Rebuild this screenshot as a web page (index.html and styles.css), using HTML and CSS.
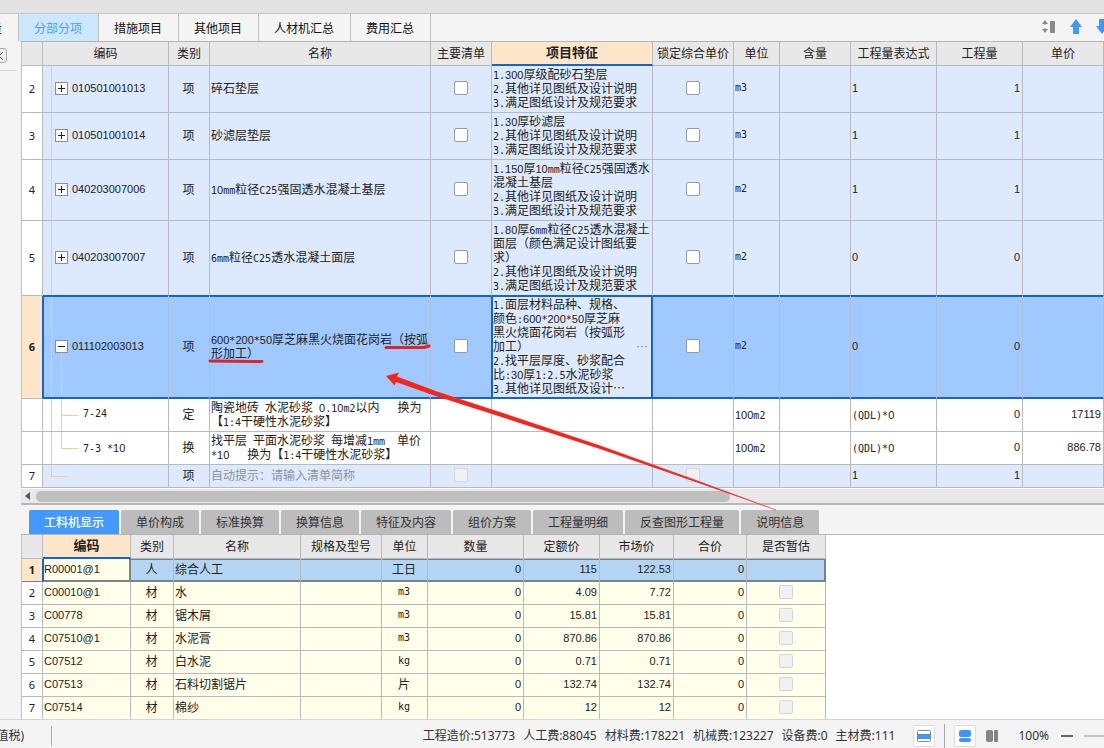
FILE: index.html
```html
<!DOCTYPE html>
<html lang="zh-CN">
<head>
<meta charset="utf-8">
<title>分部分项</title>
<link rel="stylesheet" href="styles.css">
</head>
<body>
<div class="app">
  <div class="titlebar"></div>
  <nav class="tabs">
    <button class="tab tab-cut">量</button>
    <button class="tab active">分部分项</button>
    <button class="tab">措施项目</button>
    <button class="tab">其他项目</button>
    <button class="tab">人材机汇总</button>
    <button class="tab">费用汇总</button>
    <div class="tools">
      <button class="tool" aria-label="行高"><svg width="14" height="14" viewBox="0 0 14 14"><path d="M3 0L6 4H0ZM3 13L0 9H6ZM2.5 4h1v1h-1zM2.5 8h1v1h-1z" fill="#8a8a8a"/><rect x="8" y="1" width="5" height="12" rx="1" fill="#8a8a8a"/></svg></button>
      <button class="tool up" aria-label="上移"><svg width="12" height="16" viewBox="0 0 12 16"><path d="M6 0L12 8H9V15H3V8H0Z" fill="#4198f7"/></svg></button>
      <button class="tool down" aria-label="下移"><svg width="12" height="16" viewBox="0 0 12 16"><path d="M6 15L12 7H9V0H3V7H0Z" fill="#4198f7"/></svg></button>
    </div>
  </nav>
  <div class="body">
    <aside class="rail">
      <button class="collapse" aria-label="收起"><svg width="10" height="10" viewBox="0 0 10 10"><path d="M3 1V9M8 1L4 5L8 9" fill="none" stroke="#777" stroke-width="1"/></svg></button>
    </aside>
    <main class="main">
      <table class="grid list">
        <colgroup><col class="c22"><col class="c126"><col class="c41"><col class="c221"><col class="c61"><col class="c161"><col class="c81"><col class="c46"><col class="c71"><col class="c86"><col class="c86"><col></colgroup>
        <thead><tr><th></th><th>编码</th><th>类别</th><th>名称</th><th>主要清单</th><th class="hot">项目特征</th><th>锁定综合单价</th><th>单位</th><th>含量</th><th>工程量表达式</th><th>工程量</th><th>单价</th></tr></thead>
        <tbody>
          <tr><td class="no">2</td><td class="code"><div class="node"><button class="toggle" aria-label="展开"></button>010501001013</div></td><td class="c">项</td><td>碎石垫层</td><td class="c"><input type="checkbox" aria-label="主要清单"></td><td><span class="m">1.</span><span class="d">300</span>厚级配砂石垫层<br><span class="m">2.</span>其他详见图纸及设计说明<br><span class="m">3.</span>满足图纸设计及规范要求</td><td class="c"><input type="checkbox" aria-label="锁定综合单价"></td><td class="mono">m3</td><td></td><td class="num">1</td><td class="num r">1</td><td></td></tr>
          <tr><td class="no">3</td><td class="code"><div class="node"><button class="toggle" aria-label="展开"></button>010501001014</div></td><td class="c">项</td><td>砂滤层垫层</td><td class="c"><input type="checkbox" aria-label="主要清单"></td><td><span class="m">1.</span><span class="d">30</span>厚砂滤层<br><span class="m">2.</span>其他详见图纸及设计说明<br><span class="m">3.</span>满足图纸设计及规范要求</td><td class="c"><input type="checkbox" aria-label="锁定综合单价"></td><td class="mono">m3</td><td></td><td class="num">1</td><td class="num r">1</td><td></td></tr>
          <tr><td class="no">4</td><td class="code"><div class="node"><button class="toggle" aria-label="展开"></button>040203007006</div></td><td class="c">项</td><td><span class="d">10</span><span class="m">mm</span>粒径<span class="m">C25</span>强固透水混凝土基层</td><td class="c"><input type="checkbox" aria-label="主要清单"></td><td><span class="m">1.</span><span class="d">150</span>厚<span class="d">10</span><span class="m">mm</span>粒径<span class="m">C25</span>强固透水<br>混凝土基层<br><span class="m">2.</span>其他详见图纸及设计说明<br><span class="m">3.</span>满足图纸设计及规范要求</td><td class="c"><input type="checkbox" aria-label="锁定综合单价"></td><td class="mono">m2</td><td></td><td class="num">1</td><td class="num r">1</td><td></td></tr>
          <tr class="before"><td class="no">5</td><td class="code"><div class="node"><button class="toggle" aria-label="展开"></button>040203007007</div></td><td class="c">项</td><td><span class="m">6mm</span>粒径<span class="m">C25</span>透水混凝土面层</td><td class="c"><input type="checkbox" aria-label="主要清单"></td><td><span class="m">1.</span><span class="d">80</span>厚<span class="m">6mm</span>粒径<span class="m">C25</span>透水混凝土<br>面层（颜色满足设计图纸要<br>求）<br><span class="m">2.</span>其他详见图纸及设计说明<br><span class="m">3.</span>满足图纸设计及规范要求</td><td class="c"><input type="checkbox" aria-label="锁定综合单价"></td><td class="mono">m2</td><td></td><td class="num">0</td><td class="num r">0</td><td></td></tr>
          <tr class="selected"><td class="no">6</td><td class="code open"><div class="node"><button class="toggle minus" aria-label="收起"></button>011102003013</div></td><td class="c">项</td><td><span class="d">600</span><span class="m">*</span><span class="d">200</span><span class="m">*</span><span class="d">50</span>厚芝麻黑火烧面花岗岩（按弧<br>形加工）</td><td class="c beside"><input type="checkbox" aria-label="主要清单"></td><td class="editing"><div class="feature"><div><span class="m">1.</span>面层材料品种、规格、<br>颜色<span class="m">:</span><span class="d">600</span><span class="m">*</span><span class="d">200</span><span class="m">*</span><span class="d">50</span>厚芝麻<br>黑火烧面花岗岩（按弧形<br>加工）<br><span class="m">2.</span>找平层厚度、砂浆配合<br>比<span class="m">:</span><span class="d">30</span>厚<span class="m">1:2.5</span>水泥砂浆<br><span class="m">3.</span>其他详见图纸及设计…</div><button class="more" aria-label="更多">···</button></div></td><td class="c"><input type="checkbox" aria-label="锁定综合单价"></td><td class="mono">m2</td><td></td><td class="num">0</td><td class="num r">0</td><td></td></tr>
          <tr class="sub"><td class="no"></td><td class="code child mono">7-24</td><td class="c">定</td><td>陶瓷地砖&ensp;水泥砂浆&ensp;<span class="d">0</span><span class="m">.</span><span class="d">10</span><span class="m">m2</span>以内&ensp;&ensp;&ensp;换为<br>【<span class="m">1:4</span>干硬性水泥砂浆】</td><td></td><td></td><td></td><td><span class="d">100</span><span class="m">m2</span></td><td></td><td><span class="m">(QDL)*</span><span class="d">0</span></td><td class="num r">0</td><td class="num r">17119</td></tr>
          <tr class="sub"><td class="no"></td><td class="code child last"><span class="m">7-3 *</span><span class="d">10</span></td><td class="c">换</td><td>找平层&ensp;平面水泥砂浆&ensp;每增减<span class="m">1mm</span>&ensp;&ensp;单价<br><span class="m">*</span><span class="d">10</span>&ensp;&ensp;&ensp;换为【<span class="m">1:4</span>干硬性水泥砂浆】</td><td></td><td></td><td></td><td><span class="d">100</span><span class="m">m2</span></td><td></td><td><span class="m">(QDL)*</span><span class="d">0</span></td><td class="num r">0</td><td class="num r">886.78</td></tr>
          <tr><td class="no">7</td><td class="code end"></td><td class="c">项</td><td class="hint">自动提示：请输入清单简称</td><td class="c"><input type="checkbox" disabled aria-label="主要清单"></td><td></td><td class="c"><input type="checkbox" disabled aria-label="锁定综合单价"></td><td></td><td></td><td class="num">1</td><td class="num r">1</td><td></td></tr>
        </tbody>
      </table>
      <div class="hscroll"><svg width="6" height="8" viewBox="0 0 6 8"><path d="M5 0V8L0 4Z" fill="#555"/></svg><div class="track"><div class="thumb"></div></div></div>
      <nav class="subtabs">
        <button class="subtab on">工料机显示</button><button class="subtab">单价构成</button><button class="subtab">标准换算</button><button class="subtab">换算信息</button><button class="subtab">特征及内容</button><button class="subtab">组价方案</button><button class="subtab">工程量明细</button><button class="subtab">反查图形工程量</button><button class="subtab">说明信息</button>
      </nav>
      <section class="detail">
        <table class="grid parts">
          <colgroup><col class="c22"><col class="c88"><col class="c43"><col class="c127"><col class="c81"><col class="c46"><col class="c96"><col class="c76"><col class="c74"><col class="c73"><col class="c79"></colgroup>
          <thead><tr><th></th><th class="hot">编码</th><th>类别</th><th>名称</th><th>规格及型号</th><th>单位</th><th>数量</th><th>定额价</th><th>市场价</th><th>合价</th><th>是否暂估</th></tr></thead>
          <tbody>
            <tr class="current"><td class="no">1</td><td class="num key">R00001@1</td><td class="c">人</td><td>综合人工</td><td></td><td class="c">工日</td><td class="num r">0</td><td class="num r">115</td><td class="num r">122.53</td><td class="num r">0</td><td></td></tr>
            <tr><td class="no">2</td><td class="num">C00010@1</td><td class="c">材</td><td>水</td><td></td><td class="c mono">m3</td><td class="num r">0</td><td class="num r">4.09</td><td class="num r">7.72</td><td class="num r">0</td><td class="c"><input type="checkbox" disabled aria-label="是否暂估"></td></tr>
            <tr><td class="no">3</td><td class="num">C00778</td><td class="c">材</td><td>锯木屑</td><td></td><td class="c mono">m3</td><td class="num r">0</td><td class="num r">15.81</td><td class="num r">15.81</td><td class="num r">0</td><td class="c"><input type="checkbox" disabled aria-label="是否暂估"></td></tr>
            <tr><td class="no">4</td><td class="num">C07510@1</td><td class="c">材</td><td>水泥膏</td><td></td><td class="c mono">m3</td><td class="num r">0</td><td class="num r">870.86</td><td class="num r">870.86</td><td class="num r">0</td><td class="c"><input type="checkbox" disabled aria-label="是否暂估"></td></tr>
            <tr><td class="no">5</td><td class="num">C07512</td><td class="c">材</td><td>白水泥</td><td></td><td class="c mono">kg</td><td class="num r">0</td><td class="num r">0.71</td><td class="num r">0.71</td><td class="num r">0</td><td class="c"><input type="checkbox" disabled aria-label="是否暂估"></td></tr>
            <tr><td class="no">6</td><td class="num">C07513</td><td class="c">材</td><td>石料切割锯片</td><td></td><td class="c">片</td><td class="num r">0</td><td class="num r">132.74</td><td class="num r">132.74</td><td class="num r">0</td><td class="c"><input type="checkbox" disabled aria-label="是否暂估"></td></tr>
            <tr><td class="no">7</td><td class="num">C07514</td><td class="c">材</td><td>棉纱</td><td></td><td class="c mono">kg</td><td class="num r">0</td><td class="num r">12</td><td class="num r">12</td><td class="num r">0</td><td class="c"><input type="checkbox" disabled aria-label="是否暂估"></td></tr>
          </tbody>
        </table>
      </section>
    </main>
  </div>
  <footer class="status">
    <span class="tax">值税)</span>
    <div class="sums"><span>工程造价:513773</span><span>人工费:88045</span><span>材料费:178221</span><span>机械费:123227</span><span>设备费:0</span><span>主材费:111</span></div>
    <button class="view boxed" aria-label="分栏"><svg width="14" height="12" viewBox="0 0 14 12"><rect x=".5" y=".5" width="13" height="11" rx="1" fill="#fff" stroke="#8c8c8c"/><rect x="0" y="4" width="14" height="5" fill="#3f95fb"/></svg></button>
    <i class="rule"></i>
    <button class="view boxed" aria-label="上下排列"><svg width="12" height="12" viewBox="0 0 12 12"><rect width="12" height="7" rx="2" fill="#3f95fb"/><rect y="8" width="12" height="4" rx="2" fill="#3f95fb"/></svg></button>
    <button class="view" aria-label="左右排列"><svg width="12" height="12" viewBox="0 0 12 12"><rect width="7" height="12" rx="2" fill="#858585"/><rect x="8" width="4" height="12" rx="1" fill="#858585"/></svg></button>
    <span class="zoom">100%</span>
    <button class="minus-btn" aria-label="缩小"><svg width="12" height="2" viewBox="0 0 12 2"><rect width="12" height="2" fill="#666"/></svg></button>
    <div class="slider"><input type="range" aria-label="缩放"></div>
  </footer>
  <svg class="marks" width="1104" height="748" viewBox="0 0 1104 748" aria-hidden="true">
    <path d="M210 361L262 361.500M386 347.500L424 347.500L429 346" fill="none" stroke="#dd2428" stroke-width="3" stroke-linecap="round" stroke-linejoin="round"/>
    <path d="M386 376L399 372.500L397 376.500L437 391.500L492 409.500L506 414L600 445.500L700 481.500L776 510L700 483.500L600 449L506 418.500L492 414L437 396.500L396 382L394.500 385.500Z" fill="#f7261c"/>
    <path d="M640 461.500L740 497L776 510" fill="none" stroke="#e03a3a" stroke-width=".7"/>
  </svg>
</div>
</body>
</html>
```
FILE: styles.css
```css
* { box-sizing: border-box; }
body {
  margin: 0;
  background: #f4f4f4;
  color: #222;
  font: 12px/14px "Noto Sans CJK SC", sans-serif;
  overflow: hidden;
}
button { margin: 0; padding: 0; border: 0; background: none; color: inherit; font: inherit; }
svg { display: block; flex: none; }
.app { position: relative; display: flex; flex-direction: column; height: 100vh; }
.titlebar { height: 13px; flex: none; background: #e2e2e2; }

.tabs { display: flex; flex: none; height: 28px; border-top: 1px solid #c6c6c6; overflow: hidden; }
.tab { flex: none; padding: 0 16px 0 15px; border-right: 1px solid #c0c0c0; white-space: nowrap; color: #111; }
.tab-cut { display: flex; align-items: center; justify-content: flex-end; width: 19px; padding: 0 16px 0 0; }
.tab.active { background: #cce8ff; color: #4f9df5; }
.tools { display: flex; align-items: center; gap: 14px; margin-left: auto; margin-right: -4px; padding-bottom: 2px; }

.body { display: flex; flex: 1; min-height: 0; }
.rail { flex: none; width: 21px; }
.collapse { display: flex; align-items: center; justify-content: center; width: 14px; height: 15px; margin: 7px 0 7px -7px; border: 1px solid #aaa; border-radius: 3px; background: #eee; }
.rail::after { content: ""; display: block; width: 17px; height: 1px; background: #ddd; }
.main { flex: 1; min-width: 0; display: flex; flex-direction: column; }

.grid { border-collapse: separate; border-spacing: 0; table-layout: fixed; border-top: 1px solid #b5b5b5; border-left: 1px solid #c0c0c0; }
.list { width: 100%; flex: none; }
.parts { width: 805px; background: #ffffea; }
.c22 { width: 21px; } .c41 { width: 41px; } .c43 { width: 43px; } .c46 { width: 46px; }
.c61 { width: 61px; } .c71 { width: 71px; } .c73 { width: 73px; } .c74 { width: 74px; }
.c76 { width: 76px; } .c79 { width: 79px; } .c81 { width: 81px; } .c86 { width: 86px; }
.c88 { width: 88px; } .c96 { width: 96px; } .c126 { width: 126px; } .c127 { width: 127px; }
.c161 { width: 161px; } .c221 { width: 221px; }
.grid th, .grid td { border-right: 1px solid #b7bbc0; border-bottom: 1px solid #b7bbc0; white-space: nowrap; }
.grid th { height: 24px; padding: 0 0 2px; background: #e8e8e8; font-weight: 400; text-align: center; }
.grid th.hot { background: #ffe6c8; border-bottom: 2px solid #1463d2; font-size: 13px; font-weight: 700; }
.grid td { height: 23px; padding: 1px 2px 3px 1px; text-align: left; vertical-align: middle; }
.list td { background-color: #dde9fd; }
.list td.no, .parts td.no { padding: 0; background: #fff; text-align: center; font-family: "Noto Sans", sans-serif; font-size: 11px; }
.list .sub td { background-color: #fff; }
.grid td.c { text-align: center; }
.grid td.r { text-align: right; }
.num, .node { font-family: "Liberation Sans", sans-serif; font-size: 11px; }
.mono { font-family: "DejaVu Sans Mono", monospace; font-size: 10px; }
.d, .m { line-height: 0; white-space: pre; }
.d { font-family: "Liberation Sans", sans-serif; font-size: 11px; }
.m { font-family: "DejaVu Sans Mono", monospace; font-size: 10px; }
.list .hint { color: #8b93a3; }

.list .code {
  padding-left: 12px;
  background-image: linear-gradient(#f8cb8c, #f8cb8c);
  background-position: 8px 0;
  background-size: 1px 100%;
  background-repeat: no-repeat;
}
.list .code.open {
  background-image: linear-gradient(#f8cb8c, #f8cb8c), linear-gradient(#f8cb8c, #f8cb8c);
  background-position: 8px 0, 18px 100%;
  background-size: 1px 100%, 1px 50%;
}
.list .code.child {
  padding-left: 40px;
  background-image: linear-gradient(#f8cb8c, #f8cb8c), linear-gradient(#f8cb8c, #f8cb8c), linear-gradient(#f8cb8c, #f8cb8c);
  background-position: 8px 0, 18px 0, 18px 50%;
  background-size: 1px 100%, 1px 100%, 17px 1px;
}
.list .code.last { background-size: 1px 100%, 1px 50%, 17px 1px; }
.list .code.end {
  background-image: linear-gradient(#f8cb8c, #f8cb8c), linear-gradient(#f8cb8c, #f8cb8c);
  background-position: 8px 0, 8px 50%;
  background-size: 1px 50%, 17px 1px;
}
.node { display: flex; align-items: center; gap: 4px; }
.toggle {
  width: 13px;
  height: 13px;
  border: 1px solid #8a8f96;
  background: linear-gradient(#222, #222) center / 7px 1px no-repeat, linear-gradient(#222, #222) center / 1px 7px no-repeat, #fff;
}
.toggle.minus { background: linear-gradient(#222, #222) center / 7px 1px no-repeat, #fff; }

input[type="checkbox"] { appearance: none; display: block; width: 14px; height: 14px; margin: 0 auto; border: 1px solid #959ba5; border-radius: 2px; background: #fff; }
input[type="checkbox"]:disabled { border-color: #d4d4d8; background: #f1f1f3; }

.list .before td:not(.no) { border-bottom-color: #1463d2; }
.list .selected td { background-color: #9fc9ff; border-right-color: #b1bfd6; border-bottom-color: #1463d2; box-shadow: inset 0 1px #1463d2, inset 0 -1px #1463d2; }
.list .selected td.no { background: #ffe6c8; border-right-color: #1463d2; border-bottom-color: #b7bbc0; box-shadow: none; font-weight: 700; }
.list .selected td.open { box-shadow: inset 1px 1px #1463d2, inset 0 -1px #1463d2; }
.list .selected td.beside { border-right-color: #1463d2; }
.list .selected td.editing { background: #dde9fd; border-right-color: #1463d2; box-shadow: inset 1px 1px #1463d2, inset -1px -1px #1463d2; }
.feature { display: flex; align-items: center; justify-content: space-between; }
.more { padding-right: 2px; color: #777; font-family: "Liberation Sans", sans-serif; }

.hscroll { display: flex; align-items: center; flex: none; height: 17px; gap: 5px; padding-left: 4px; border-top: 1px solid #fff; border-bottom: 2px solid #b9b9b9; background: #e8e8e8; }
.track { flex: 1; }
.thumb { width: 65%; height: 11px; border-radius: 5px; background: #bfbfbf; }

.subtabs { display: flex; flex: none; gap: 2px; padding: 5px 0 0 8px; }
.subtab { height: 24px; padding: 0 15px; border-radius: 2px 2px 0 0; background: #bcbcbc; color: #333; white-space: nowrap; }
.subtab.on { background: #4499ff; color: #fff; font-weight: 500; }
.detail { flex: 1; min-height: 0; overflow: hidden; border-top: 1px solid #b5b5b5; background: #fff; }
.parts { border-top: 0; }
.parts .current td { background: #b3d5f3; border-bottom-color: #7d8287; box-shadow: inset 0 1px #7d8287, inset 0 -1px #7d8287; }
.parts .current td:last-child { border-right-color: #7d8287; box-shadow: inset 0 1px #7d8287, inset -1px -1px #7d8287; }
.parts .current td.key { background: #ffffea; border-right: 2px solid #7d8287; box-shadow: inset 1px 0 #1463d2, inset 0 -1px #7d8287; }
.parts .current td.no { background: #ffe6c8; border-right-color: #1463d2; box-shadow: none; font-weight: 700; }

.status { display: flex; align-items: center; flex: none; height: 29px; padding-top: 4px; border-top: 1px solid #d5d5d5; background: #f4f4f4; color: #333; font-family: "Noto Sans", "Noto Sans CJK SC", sans-serif; white-space: nowrap; overflow: hidden; }
.tax { display: flex; justify-content: flex-end; width: 52px; height: 20px; padding-right: 27px; line-height: 20px; border-right: 1px solid #aaa; }
.sums { display: flex; gap: 8px; margin-left: auto; margin-right: 18px; }
.view { display: flex; align-items: center; justify-content: center; width: 20px; height: 20px; }
.boxed { width: 22px; height: 22px; border: 1px solid #ddd; border-radius: 2px; background: #fff; }
.rule { width: 1px; height: 24px; margin: 0 9px; background: #aaa; }
.view:not(.boxed) { margin-left: 6px; }
.zoom { margin: 0 12px 0 16px; }
.slider { width: 20px; margin-left: 11px; overflow: hidden; }
.slider input { appearance: none; display: block; width: 120px; height: 2px; margin: 0; background: #c4c4c4; }
.slider input::-webkit-slider-thumb { appearance: none; width: 8px; height: 8px; background: #777; }

.marks { position: absolute; top: 0; left: 0; pointer-events: none; }
```
